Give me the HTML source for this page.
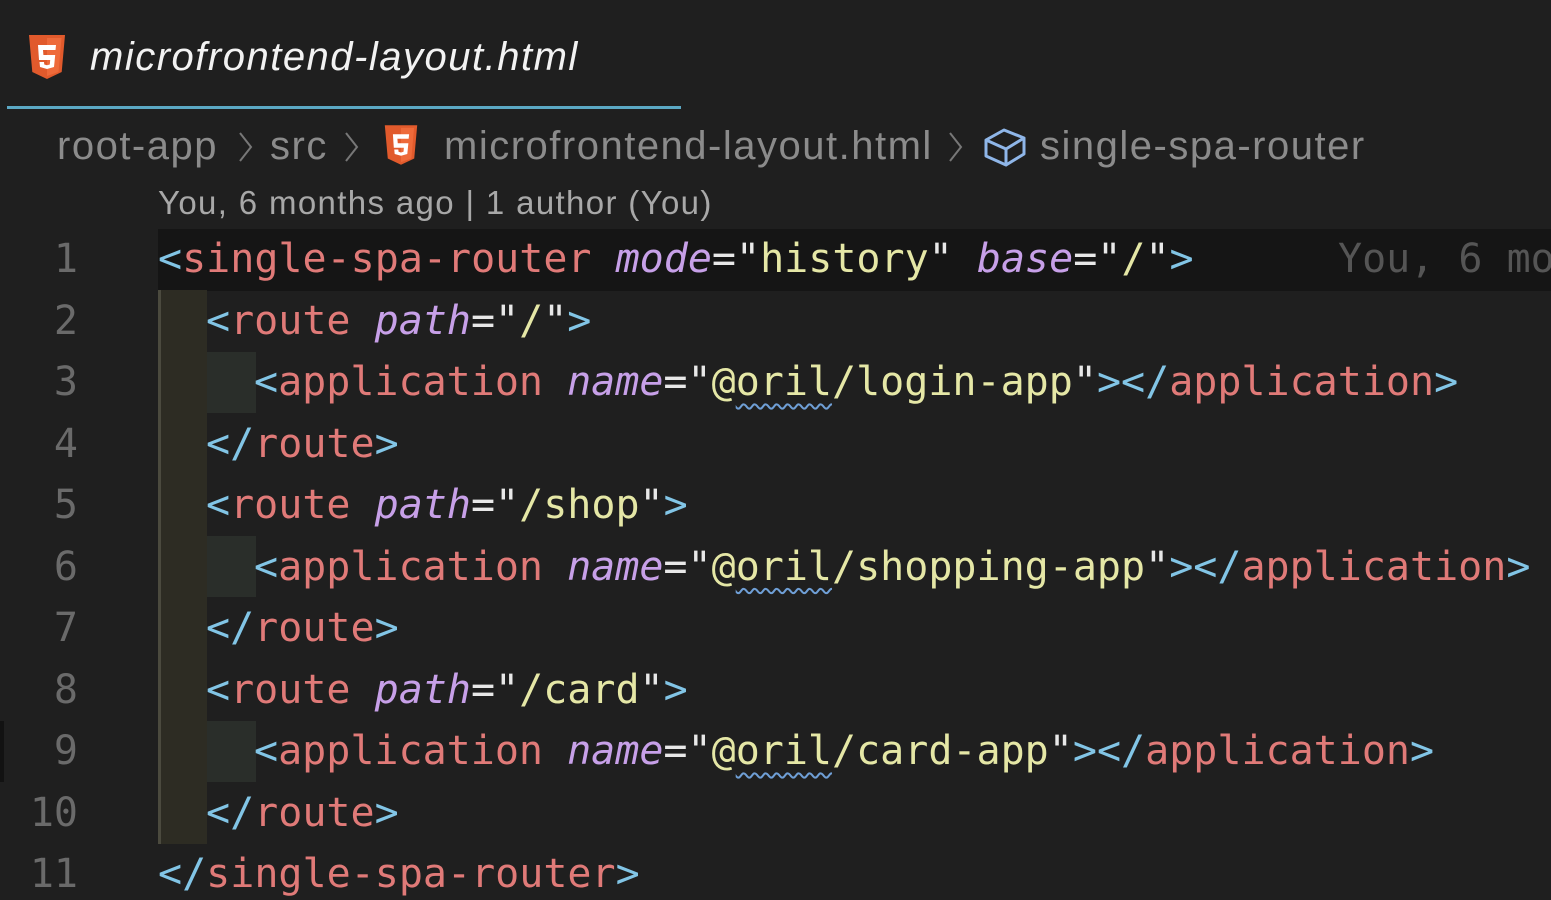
<!DOCTYPE html>
<html><head><meta charset="utf-8"><style>
html,body{margin:0;padding:0;background:#1f1f1f;width:1551px;height:900px;overflow:hidden;position:relative}
.abs{position:absolute}
.tab{left:90px;top:35px;font:italic 40px "Liberation Sans",sans-serif;letter-spacing:1.5px;color:#f2f2f2;white-space:nowrap}
.crumb{top:124px;font:40px "Liberation Sans",sans-serif;letter-spacing:1.5px;color:#8b8b8b;white-space:nowrap}
.lens{left:158px;top:184px;font:33px "Liberation Sans",sans-serif;letter-spacing:1.35px;color:#a8a8a8;white-space:nowrap}
.code{font:40px "DejaVu Sans Mono",monospace;white-space:pre;height:61.5px;line-height:61.5px}
.ln{width:78px;text-align:right;color:#6a6a6a;left:0}
.b{color:#82c5e6}.t{color:#e07a78}.a{color:#c7a0e8;font-style:italic}.s{color:#e5e7a6}.w{color:#e8e8e8}
.sq{text-decoration:underline wavy #6f9fd6;text-decoration-thickness:2px;text-underline-offset:8px}
</style></head><body>
<svg class="abs" style="left:27px;top:34px" width="40" height="46" viewBox="0 0 40 46"><path d="M2 1h36l-3.3 37L20 45 5.3 38z" fill="#e15a2c"/><path d="M20 4v38l11.5-4 3-34z" fill="#ee6a3a"/><path d="M11 11h18l-.5 5H16l.4 5h11.8l-1.2 12L20 35l-7-2-.5-5h4.5l.3 2.5 2.7.8 2.8-.8.4-4.5H12z" fill="#fff"/></svg>
<div class="abs tab">microfrontend-layout.html</div>
<div class="abs" style="left:7px;top:106px;width:674px;height:3px;background:#5ba8c4"></div>
<div class="abs crumb" style="left:57px">root-app</div>
<svg class="abs" style="left:236px;top:130px" width="20" height="34"><path d="M4 3l11 14L4 31" fill="none" stroke="#777" stroke-width="2"/></svg>
<div class="abs crumb" style="left:270px">src</div>
<svg class="abs" style="left:342px;top:130px" width="20" height="34"><path d="M4 3l11 14L4 31" fill="none" stroke="#777" stroke-width="2"/></svg>
<svg class="abs" style="left:383px;top:123px" width="36" height="44" viewBox="0 0 40 46"><path d="M2 1h36l-3.3 37L20 45 5.3 38z" fill="#e15a2c"/><path d="M20 4v38l11.5-4 3-34z" fill="#ee6a3a"/><path d="M11 11h18l-.5 5H16l.4 5h11.8l-1.2 12L20 35l-7-2-.5-5h4.5l.3 2.5 2.7.8 2.8-.8.4-4.5H12z" fill="#fff"/></svg>
<div class="abs crumb" style="left:444px">microfrontend-layout.html</div>
<svg class="abs" style="left:946px;top:130px" width="20" height="34"><path d="M4 3l11 14L4 31" fill="none" stroke="#777" stroke-width="2"/></svg>
<svg class="abs" style="left:982px;top:126px" width="46" height="42" viewBox="0 0 46 42"><g fill="none" stroke="#8fb6e8" stroke-width="3" stroke-linejoin="round"><path d="M4 14L22 4l20 8-18 11z"/><path d="M4 14v16l20 9V23"/><path d="M42 12v16L24 39"/></g></svg>
<div class="abs crumb" style="left:1040px">single-spa-router</div>
<div class="abs lens">You, 6 months ago | 1 author (You)</div>
<div class="abs" style="left:158px;top:229px;width:1393px;height:61.5px;background:#151515"></div>
<div class="abs" style="left:158px;top:290px;width:49px;height:554px;background:#2d2c23"></div>
<div class="abs" style="left:158px;top:290px;width:3px;height:554px;background:#4b4a3e"></div>
<div class="abs" style="left:207px;top:352px;width:49px;height:61px;background:#2a2e2a"></div>
<div class="abs" style="left:207px;top:536px;width:49px;height:61px;background:#2a2e2a"></div>
<div class="abs" style="left:207px;top:721px;width:49px;height:61px;background:#2a2e2a"></div>
<div class="abs" style="left:0;top:721px;width:4px;height:61px;background:#121212"></div>

<div class="abs code ln" style="top:229px">1</div>
<div class="abs code ln" style="top:290.5px">2</div>
<div class="abs code ln" style="top:352px">3</div>
<div class="abs code ln" style="top:413.5px">4</div>
<div class="abs code ln" style="top:475px">5</div>
<div class="abs code ln" style="top:536.5px">6</div>
<div class="abs code ln" style="top:598px">7</div>
<div class="abs code ln" style="top:659.5px">8</div>
<div class="abs code ln" style="top:721px">9</div>
<div class="abs code ln" style="top:782.5px">10</div>
<div class="abs code ln" style="top:844px">11</div>

<div class="abs code" style="left:158px;top:229px"><span class="b">&lt;</span><span class="t">single-spa-router</span> <span class="a">mode</span><span class="w">="</span><span class="s">history</span><span class="w">"</span> <span class="a">base</span><span class="w">="</span><span class="s">/</span><span class="w">"</span><span class="b">&gt;</span></div>
<div class="abs code" style="left:1338px;top:229px;color:#555">You, 6 mo</div>
<div class="abs code" style="left:206px;top:290.5px"><span class="b">&lt;</span><span class="t">route</span> <span class="a">path</span><span class="w">="</span><span class="s">/</span><span class="w">"</span><span class="b">&gt;</span></div>
<div class="abs code" style="left:254px;top:352px"><span class="b">&lt;</span><span class="t">application</span> <span class="a">name</span><span class="w">="</span><span class="s">@<span class="sq">oril</span>/login-app</span><span class="w">"</span><span class="b">&gt;&lt;/</span><span class="t">application</span><span class="b">&gt;</span></div>
<div class="abs code" style="left:206px;top:413.5px"><span class="b">&lt;/</span><span class="t">route</span><span class="b">&gt;</span></div>
<div class="abs code" style="left:206px;top:475px"><span class="b">&lt;</span><span class="t">route</span> <span class="a">path</span><span class="w">="</span><span class="s">/shop</span><span class="w">"</span><span class="b">&gt;</span></div>
<div class="abs code" style="left:254px;top:536.5px"><span class="b">&lt;</span><span class="t">application</span> <span class="a">name</span><span class="w">="</span><span class="s">@<span class="sq">oril</span>/shopping-app</span><span class="w">"</span><span class="b">&gt;&lt;/</span><span class="t">application</span><span class="b">&gt;</span></div>
<div class="abs code" style="left:206px;top:598px"><span class="b">&lt;/</span><span class="t">route</span><span class="b">&gt;</span></div>
<div class="abs code" style="left:206px;top:659.5px"><span class="b">&lt;</span><span class="t">route</span> <span class="a">path</span><span class="w">="</span><span class="s">/card</span><span class="w">"</span><span class="b">&gt;</span></div>
<div class="abs code" style="left:254px;top:721px"><span class="b">&lt;</span><span class="t">application</span> <span class="a">name</span><span class="w">="</span><span class="s">@<span class="sq">oril</span>/card-app</span><span class="w">"</span><span class="b">&gt;&lt;/</span><span class="t">application</span><span class="b">&gt;</span></div>
<div class="abs code" style="left:206px;top:782.5px"><span class="b">&lt;/</span><span class="t">route</span><span class="b">&gt;</span></div>
<div class="abs code" style="left:158px;top:844px"><span class="b">&lt;/</span><span class="t">single-spa-router</span><span class="b">&gt;</span></div>
</body></html>
